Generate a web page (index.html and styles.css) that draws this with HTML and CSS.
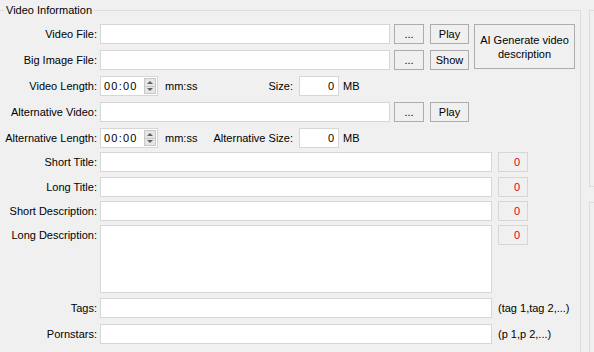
FILE: index.html
```html
<!DOCTYPE html>
<html lang="en">

<head>
	<meta charset="UTF-8">
	<meta name="viewport" content="width=device-width, initial-scale=1.0">
	<title>Video Information</title>
	<link rel="stylesheet" href="styles.css">
</head>

<body>
	<div class="page">
		<fieldset class="group">
			<legend>Video Information</legend>

			<div class="top">
				<div class="top-rows">
					<div class="row first">
						<label class="lbl">Video File:</label>
						<input type="text" class="field path">
						<button type="button" class="btn browse">...</button>
						<button type="button" class="btn act">Play</button>
					</div>
					<div class="row">
						<label class="lbl">Big Image File:</label>
						<input type="text" class="field path">
						<button type="button" class="btn browse">...</button>
						<button type="button" class="btn act">Show</button>
					</div>
				</div>
				<button type="button" class="btn ai">AI Generate video description</button>
			</div>

			<div class="row">
				<label class="lbl">Video Length:</label>
				<div class="spin">
					<input type="text" class="spin-text" value="00:00">
					<div class="spin-btns">
						<span class="arrow up"></span>
						<span class="arrow down"></span>
					</div>
				</div>
				<span class="unit">mm:ss</span>
				<label class="size-lbl">Size:</label>
				<input type="text" class="field size" value="0">
				<span class="mb">MB</span>
			</div>

			<div class="row">
				<label class="lbl">Alternative Video:</label>
				<input type="text" class="field path">
				<button type="button" class="btn browse">...</button>
				<button type="button" class="btn act">Play</button>
			</div>

			<div class="row">
				<label class="lbl">Alternative Length:</label>
				<div class="spin">
					<input type="text" class="spin-text" value="00:00">
					<div class="spin-btns">
						<span class="arrow up"></span>
						<span class="arrow down"></span>
					</div>
				</div>
				<span class="unit">mm:ss</span>
				<label class="size-lbl">Alternative Size:</label>
				<input type="text" class="field size" value="0">
				<span class="mb">MB</span>
			</div>

			<div class="row g4">
				<label class="lbl">Short Title:</label>
				<input type="text" class="field wide">
				<span class="count">0</span>
			</div>

			<div class="row g5">
				<label class="lbl">Long Title:</label>
				<input type="text" class="field wide">
				<span class="count">0</span>
			</div>

			<div class="row g4">
				<label class="lbl">Short Description:</label>
				<input type="text" class="field wide">
				<span class="count">0</span>
			</div>

			<div class="row g4 tall">
				<label class="lbl">Long Description:</label>
				<textarea class="field wide area"></textarea>
				<span class="count">0</span>
			</div>

			<div class="row g5">
				<label class="lbl">Tags:</label>
				<input type="text" class="field wide">
				<span class="hint">(tag 1,tag 2,...)</span>
			</div>

			<div class="row">
				<label class="lbl">Pornstars:</label>
				<input type="text" class="field wide">
				<span class="hint">(p 1,p 2,...)</span>
			</div>
		</fieldset>

		<div class="side">
			<div class="box one"></div>
			<div class="box two"></div>
		</div>
	</div>
</body>
</html>
```

FILE: styles.css
```css
* {
	box-sizing: border-box;
}

html,
body {
	overflow: hidden;
}

body {
	margin: 0;
	background-color: #f0f0f0;
	font-family: "Liberation Sans", Arial, sans-serif;
	font-size: 11px;
	color: #000;
}

.page {
	display: flex;
	align-items: flex-start;
	gap: 8px;
	height: 352px;
	width: 596px;
	margin-left: -2px;
	padding-top: 3px;
	overflow: hidden;
}

.group {
	flex: none;
	width: 583px;
	height: 356px;
	min-width: 0;
	margin: 0;
	padding: 0;
	border: 1px solid #dcdcdc;
}

.group legend {
	margin-left: 5px;
	padding: 0 2px;
	line-height: 14px;
}

.top {
	display: flex;
	align-items: flex-start;
	margin-top: 7px;
}

.row {
	display: flex;
	align-items: center;
	height: 20px;
	margin-top: 6px;
}

.row.first {
	margin-top: 0;
}

.row.g4 {
	margin-top: 4px;
}

.row.g5 {
	margin-top: 5px;
}

.row.tall {
	height: 68px;
	align-items: flex-start;
}

.lbl {
	flex: none;
	width: 98px;
	text-align: right;
	line-height: 20px;
	white-space: nowrap;
}

.field {
	height: 20px;
	margin: 0 0 0 3px;
	padding: 0 3px;
	border: 1px solid #d6d6d6;
	background-color: #fff;
	font: inherit;
	outline: none;
}

.path {
	width: 290px;
}

.wide {
	width: 392px;
}

.area {
	height: 68px;
	resize: none;
}

.btn {
	height: 20px;
	padding: 0;
	border: 1px solid #adadad;
	background-color: #f0f0f0;
	font: inherit;
	color: #000;
}

.browse {
	width: 30px;
	margin-left: 4px;
}

.act {
	width: 39px;
	margin-left: 6px;
}

.ai {
	width: 101px;
	height: 45px;
	margin-left: 5px;
	padding: 0 4px;
	line-height: 14px;
}

.spin {
	display: flex;
	align-items: center;
	width: 58px;
	height: 20px;
	margin-left: 3px;
	border: 1px solid #d6d6d6;
	background-color: #fff;
}

.spin-text {
	width: 40px;
	border: none;
	padding: 0 0 0 3px;
	font: inherit;
	letter-spacing: 1.2px;
	outline: none;
	background: transparent;
}

.spin-btns {
	display: flex;
	flex-direction: column;
	width: 12px;
	height: 16px;
	margin-left: auto;
	margin-right: 1px;
	border: 1px solid #c8c8c8;
}

.arrow {
	display: flex;
	flex: 1;
	align-items: center;
	justify-content: center;
	background-color: #e6e6e6;
}

.arrow.up {
	border-bottom: 1px solid #c8c8c8;
}

.arrow::before {
	content: "";
	border-left: 3px solid transparent;
	border-right: 3px solid transparent;
}

.arrow.up::before {
	border-bottom: 3px solid #606060;
}

.arrow.down::before {
	border-top: 3px solid #606060;
}

.unit {
	width: 35px;
	margin-left: 7px;
}

.size-lbl {
	width: 93px;
	text-align: right;
}

.size {
	width: 40px;
	margin-left: 6px;
	text-align: right;
	padding-right: 4px;
}

.mb {
	margin-left: 4px;
}

.count {
	width: 30px;
	height: 20px;
	margin-left: 6px;
	padding-right: 7px;
	border: 1px solid #d6d6d6;
	text-align: right;
	line-height: 18px;
	color: #d8001c;
}

.hint {
	margin-left: 6px;
}

.side {
	display: flex;
	flex-direction: column;
	gap: 15px;
	margin-top: 7px;
}

.box {
	flex: none;
	width: 10px;
	border: 1px solid #dcdcdc;
}

.box.one {
	height: 177px;
}

.box.two {
	height: 160px;
}
```
